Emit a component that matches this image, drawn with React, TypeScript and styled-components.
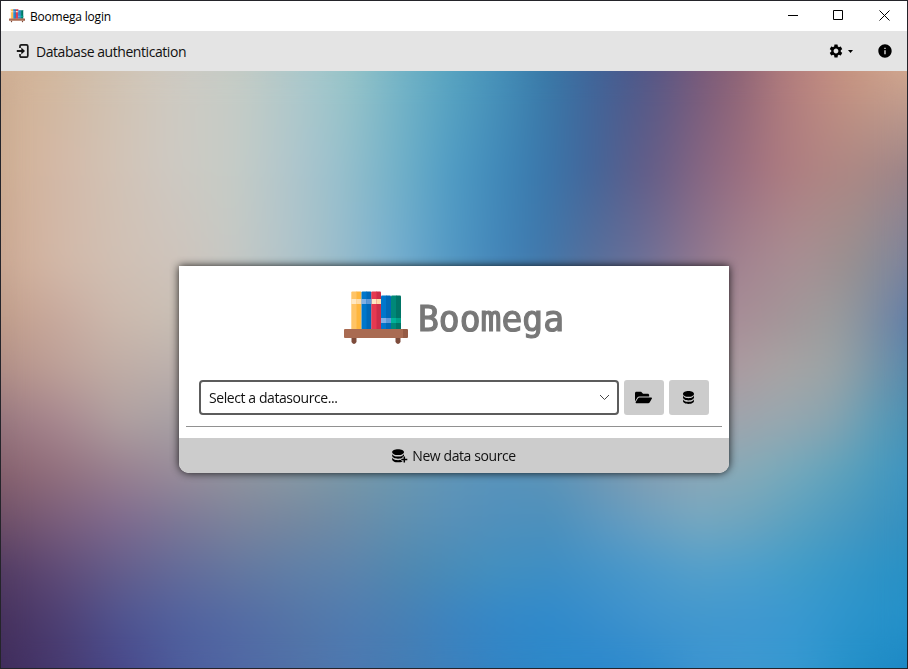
import React from 'react';
import styled, { createGlobalStyle } from 'styled-components';
import { MdSettings, MdInfo } from 'react-icons/md';
import { FaFolderOpen } from 'react-icons/fa';

const GlobalStyle = createGlobalStyle`
  * { box-sizing: border-box; }
  body { margin: 0; font-family: "Open Sans", "Noto Sans", sans-serif; color: #111; }
`;

/* Backdrop: horizontal colour rows, each faded in over the previous one. */
type Row = { y: number; stops: [number, string][] };

const rows: Row[] = [
  { y: 0, stops: [[0, '#d2b094'], [50, '#d2b89e'], [100, '#d0c0ae'], [150, '#d0c8bc'], [190, '#cccbc4'], [240, '#c4ccc6'], [270, '#b8cac8'], [310, '#a8c8cc'], [350, '#96c4c8'], [400, '#74b4c6'], [450, '#58a4c0'], [500, '#4690b8'], [545, '#3a7aa8'], [590, '#40669a'], [630, '#4c5a8c'], [660, '#5c5884'], [700, '#785a7a'], [740, '#906576'], [780, '#ae7a7c'], [820, '#c08a80'], [850, '#c89682'], [880, '#cea08a'], [906, '#d2a890']] },
  { y: 99, stops: [[0, '#d2b094'], [60, '#d3b9a8'], [110, '#d2c2b4'], [170, '#cec9c2'], [230, '#c6ccc6'], [290, '#b0c6cc'], [340, '#98c0cc'], [400, '#70b0c8'], [450, '#509cc4'], [500, '#4088b8'], [540, '#3a78ac'], [590, '#43669a'], [630, '#5a5e8c'], [660, '#6a5e86'], [700, '#866682'], [740, '#9a6e80'], [780, '#ac7a80'], [820, '#b08482'], [860, '#ac8884'], [906, '#9c8488']] },
  { y: 195, stops: [[0, '#ceaa94'], [60, '#d2b8a8'], [120, '#d0c0b4'], [180, '#cec4bc'], [230, '#c6c8c4'], [290, '#b0c4ca'], [340, '#98bccc'], [390, '#78b0d0'], [450, '#5298c4'], [500, '#4284b8'], [540, '#4078ac'], [590, '#566f9c'], [640, '#6c7098'], [690, '#8c7690'], [740, '#a48490'], [800, '#a89094'], [850, '#989090'], [880, '#888c98'], [906, '#78809c']] },
  { y: 246, stops: [[0, '#c4a08c'], [60, '#c8aa9e'], [110, '#ccb8ac'], [170, '#cabfb4'], [400, '#88a8bc'], [600, '#7888a4'], [730, '#a88c96'], [780, '#a49498'], [830, '#9c9c9c'], [870, '#8490a0'], [906, '#5f7ca8']] },
  { y: 299, stops: [[0, '#b49088'], [60, '#bda098'], [110, '#c0aca4'], [170, '#bcb0ac'], [300, '#a4acb0'], [450, '#6096b8'], [600, '#8090a8'], [730, '#ac9aa0'], [780, '#a8a4a4'], [830, '#9ca4a6'], [870, '#7c98a8'], [906, '#5588ac']] },
  { y: 350, stops: [[0, '#9a7880'], [60, '#a88890'], [120, '#b0a0a0'], [170, '#a8a0a4'], [300, '#98a0a8'], [450, '#6096b8'], [600, '#8098a8'], [730, '#a0a4ac'], [780, '#98a8b0'], [830, '#88a4b0'], [870, '#649eb6'], [906, '#4890b4']] },
  { y: 402, stops: [[0, '#88626f'], [60, '#92707e'], [120, '#988090'], [180, '#988c9a'], [240, '#90949e'], [290, '#8898a4'], [350, '#7898a8'], [400, '#6c98b0'], [450, '#6096b8'], [500, '#5894bc'], [550, '#5c94b8'], [600, '#7098b4'], [650, '#84a0b4'], [700, '#8ca8b8'], [750, '#84abb8'], [800, '#70a8bc'], [850, '#58a0bc'], [906, '#3c94c0']] },
  { y: 450, stops: [[0, '#705068'], [60, '#7a5e7c'], [120, '#7f6a8e'], [180, '#7c7896'], [240, '#7c849c'], [300, '#7488a0'], [350, '#6c8ca8'], [400, '#6090b0'], [450, '#5890b8'], [500, '#5090bc'], [550, '#4c90bc'], [600, '#5c98c0'], [650, '#6ca0c0'], [700, '#76a8c0'], [750, '#6ca4be'], [800, '#58a0c0'], [850, '#4898c0'], [906, '#3490c0']] },
  { y: 499, stops: [[0, '#543c64'], [60, '#604c78'], [120, '#645e8c'], [180, '#646c9a'], [240, '#6478a0'], [300, '#6080a8'], [350, '#5c84ac'], [400, '#5088b0'], [450, '#488cb8'], [500, '#4290c0'], [550, '#3e8ec4'], [600, '#4494c8'], [650, '#4c9aca'], [700, '#549fca'], [750, '#4c9fcc'], [800, '#409cc8'], [850, '#3496c8'], [906, '#2890c4']] },
  { y: 548, stops: [[0, '#48325e'], [60, '#4e4074'], [120, '#505490'], [180, '#52629e'], [240, '#546ca4'], [300, '#5476a8'], [350, '#507cb0'], [400, '#4880b4'], [450, '#3c84c0'], [500, '#3488c8'], [550, '#308acb'], [600, '#388ecc'], [650, '#4094ce'], [700, '#4298ce'], [750, '#4098d0'], [800, '#3898d0'], [850, '#2c94cc'], [906, '#2490c8']] },
  { y: 597, stops: [[0, '#402c5c'], [60, '#463a70'], [120, '#48488a'], [180, '#4c5c9c'], [240, '#5068a4'], [300, '#5072a8'], [350, '#4c78b0'], [400, '#447cb4'], [450, '#3c80bc'], [500, '#3284c4'], [550, '#2c88c8'], [600, '#2c88cc'], [650, '#308ccc'], [700, '#3c94d0'], [750, '#3c98d0'], [800, '#3498d0'], [850, '#2490c8'], [906, '#1c88c4']] },
];

const Window = styled.div`
  width: 908px; height: 669px; border: 1px solid #24242a;
  display: flex; flex-direction: column; overflow: hidden;
`;
const TitleBar = styled.header`
  height: 30px; flex: none; background: #fff;
  display: flex; align-items: center; justify-content: space-between; padding-left: 8px;
`;
const TitleLabel = styled.div`
  display: flex; align-items: center; gap: 5px;
  font-size: 12px; letter-spacing: -0.2px; color: #000;
`;
const WindowButtons = styled.div`display: flex; height: 100%;`;
const WindowButton = styled.button`
  width: 45px; height: 100%; padding: 0 0 2px; border: 0; background: none;
  display: flex; align-items: center; justify-content: center;
  &:last-child { width: 46px; }
`;
const ToolBar = styled.nav`
  height: 40px; flex: none; background: #e4e4e4;
  display: flex; align-items: center; justify-content: space-between; padding: 0 14px 0 15px;
`;
const ToolLabel = styled.div`
  display: flex; align-items: center; gap: 7px; font-size: 14px; letter-spacing: -0.44px;
`;
const ToolActions = styled.div`display: flex; align-items: center; gap: 24px;`;
const SettingsButton = styled.div`display: flex; align-items: center; gap: 4px;`;

const Stage = styled.main`flex: 1; min-height: 0; display: grid; place-items: center;`;
const BackdropRow = styled.div<{ $row: Row; $from: number }>`
  grid-area: 1 / 1; place-self: stretch;
  background: linear-gradient(to right, ${p => p.$row.stops.map(([x, c]) => `${c} ${x}px`).join(', ')});
  ${p => p.$row.y > 0 && `mask-image: linear-gradient(to bottom, transparent ${p.$from}px, #000 ${p.$row.y}px);`}
`;
/* Evens out the seams between neighbouring colour stops. */
const BackdropSoftener = styled.div`
  grid-area: 1 / 1; place-self: stretch; backdrop-filter: blur(14px);
`;
const Card = styled.section`
  grid-area: 1 / 1; z-index: 1; width: 550px; height: 207px;
  display: flex; flex-direction: column; background: #fff;
  border-radius: 0 0 10px 10px; box-shadow: 0 0 9px rgba(0, 0, 0, 0.85);
`;
const Brand = styled.div`
  height: 114px; padding-top: 25px; display: flex; justify-content: center; gap: 10px;
`;
const BrandName = styled.h1`
  margin: 6px 0 0; font: 400 34.7px/44px "DejaVu Sans Mono", monospace;
  color: #787878; -webkit-text-stroke: 1.2px #787878;
`;
const SourceRow = styled.div`display: flex; gap: 5px; padding: 0 20px; height: 35px;`;
const Combo = styled.div`
  width: 420px; border: 2px solid #5c5c5c; border-radius: 4px;
  display: flex; align-items: center; justify-content: space-between; padding: 0 7px 0 8px;
  font-size: 14px; letter-spacing: -0.42px;
`;
const SquareButton = styled.button`
  width: 40px; border: 0; border-radius: 3px; background: #ccc; color: #000; padding: 0 1px 0 0;
  display: flex; align-items: center; justify-content: center;
`;
const Divider = styled.hr`width: 536px; height: 1px; border: 0; margin: 11px auto; background: #919191;`;
const NewSource = styled.button`
  height: 35px; border: 0; border-radius: 0 0 10px 10px; background: #ccc; color: #111; padding: 0;
  display: flex; align-items: center; justify-content: center; gap: 4px;
  font: 14px "Open Sans", sans-serif; letter-spacing: -0.41px;
`;

const BookShelf = ({ width }: { width: number }) => (
  <svg width={width} height={(width * 53) / 64} viewBox="0 0 64 53">
    <path fill="#ffc466" d="M7.3 1.5q0-1 1-1H13v38H7.3z" />
    <path fill="#ffb63d" d="M12.5.5h4q1 0 1 1v37h-5z" />
    <path fill="#0077cc" d="M17.5 1.5q0-1 1-1H23v38h-5.500z" />
    <path fill="#0068b6" d="M22.500.5h4q1 0 1 1v37h-5z" />
    <path fill="#e63950" d="M27.300 1.500q0-1 1-1H33v38h-5.700z" />
    <path fill="#cc2e48" d="M32.500.5h3.500q1 0 1 1v37h-4.500z" />
    <path fill="#0077cc" d="M37 5.500q0-1 1-1h4.500v34H37z" />
    <path fill="#0068b6" d="M42 4.500h4q1 0 1 1v33h-5z" />
    <path fill="#008878" d="M47 5.500q0-1 1-1h4.500v34H47z" />
    <path fill="#007466" d="M52 4.500h4q1 0 1 1v33h-5z" />
    <path fill="#ffe8c4" d="M7.300 8h5.200v5H7.300zM27.500 8h5v5h-5z" />
    <path fill="#ffdca8" d="M12.500 8h5v5h-5zM32.500 8H37v5h-4.500z" />
    <path fill="#7fb0e6" d="M17.500 8h5v5h-5zM37 27h5v5h-5z" />
    <path fill="#5c98d8" d="M22.500 8h5v5h-5zM42 27h5v5h-5z" />
    <path fill="#00b39a" d="M47 27h5v5h-5z" />
    <path fill="#00a088" d="M52 27h5v5h-5z" />
    <path fill="#7d4b3b" d="M7.500 46.500h5V51q-2.500 4-5 0zM51.500 46.500h5V51q-2.500 4-5 0z" />
    <path fill="#a96b52" d="M1 38h59v9H1q-1 0-1-1v-7q0-1 1-1z" />
    <path fill="#955b45" d="M59 38h4q1 0 1 1v7q0 1-1 1h-4z" />
  </svg>
);

const LoginIcon = () => (
  <svg width="13" height="14" viewBox="0 0 13 14" fill="none" stroke="#1a1a1a" strokeWidth="1.700">
    <path d="M4 4V2.200Q4 .9 5.400.9h5q1.400 0 1.400 1.400v9.400q0 1.400-1.400 1.400h-5Q4 13.100 4 11.800V10" />
    <path d="M.8 7h6" strokeWidth="2" />
    <path d="M5.300 3.500 9 7l-3.700 3.500z" fill="#111" stroke="none" />
  </svg>
);

const cylinder =
  'M12 3C7.580 3 4 4.790 4 7s3.580 4 8 4 8-1.790 8-4-3.580-4-8-4M4 9v3c0 2.210 3.580 4 8 4s8-1.790 8-4V9c0 2.210-3.580 4-8 4s-8-1.790-8-4m0 5v3c0 2.210 3.580 4 8 4s8-1.790 8-4v-3c0 2.210-3.580 4-8 4s-8-1.790-8-4z';

const DatabaseIcon = () => (
  <svg width="11" height="13" viewBox="4 3 16 18" preserveAspectRatio="none"><path d={cylinder} /></svg>
);
const DatabasePlusIcon = () => (
  <svg width="16" height="14" viewBox="0 0 16 14">
    <path transform="translate(-2.800 -1.800) scale(.74 .72)" d={cylinder} />
    <path d="M12.300 7.500v6M9.300 10.500h6" stroke="#ccc" strokeWidth="3.200" />
    <path d="M12.300 7.500v6M9.300 10.500h6" stroke="#000" strokeWidth="1.500" />
  </svg>
);

export default function App() {
  return (
    <>
      <GlobalStyle />
      <Window>
        <TitleBar>
          <TitleLabel><BookShelf width={16} />Boomega login</TitleLabel>
          <WindowButtons>
            <WindowButton aria-label="Minimize">
              <svg width="11" height="11"><path d="M0 5.500h10" stroke="#000" /></svg>
            </WindowButton>
            <WindowButton aria-label="Maximize">
              <svg width="11" height="11"><path d="M.5.5h9v9h-9z" fill="none" stroke="#000" /></svg>
            </WindowButton>
            <WindowButton aria-label="Close">
              <svg width="11" height="11"><path d="m.5.5 10 10m0-10-10 10" stroke="#000" /></svg>
            </WindowButton>
          </WindowButtons>
        </TitleBar>
        <ToolBar>
          <ToolLabel><LoginIcon />Database authentication</ToolLabel>
          <ToolActions>
            <SettingsButton>
              <MdSettings size={16} color="#000" />
              <svg width="5" height="3"><path d="M0 0h5L2.500 3z" /></svg>
            </SettingsButton>
            <MdInfo size={16} color="#000" />
          </ToolActions>
        </ToolBar>
        <Stage>
          {rows.map((row, i) => (
            <BackdropRow key={row.y} $row={row} $from={i ? rows[i - 1].y : 0} />
          ))}
          <BackdropSoftener />
          <Card>
            <Brand><BookShelf width={64} /><BrandName>Boomega</BrandName></Brand>
            <SourceRow>
              <Combo>
                Select a datasource...
                <svg width="11" height="7"><path d="m1 1 4.500 4.500L10 1" fill="none" stroke="#444" /></svg>
              </Combo>
              <SquareButton aria-label="Open"><FaFolderOpen size={17} /></SquareButton>
              <SquareButton aria-label="Data sources"><DatabaseIcon /></SquareButton>
            </SourceRow>
            <Divider />
            <NewSource><DatabasePlusIcon />New data source</NewSource>
          </Card>
        </Stage>
      </Window>
    </>
  );
}
